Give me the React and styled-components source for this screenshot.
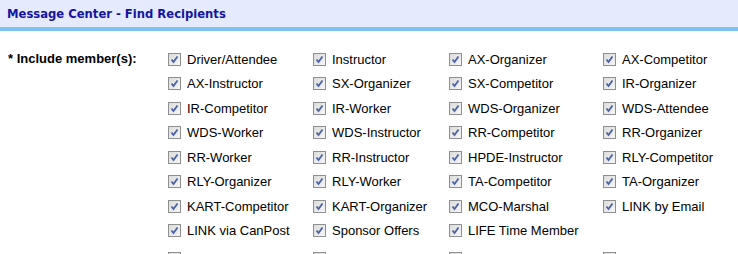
import React from 'react';
import styled, { createGlobalStyle } from 'styled-components';

const GlobalStyle = createGlobalStyle`
  html, body {
    margin: 0;
    padding: 0;
    background: #ffffff;
    overflow: hidden;
  }
  body {
    font-family: "Liberation Sans", Arial, sans-serif;
  }
`;

const Page = styled.div`
  width: 738px;
  height: 254px;
  overflow: hidden;
`;

const Header = styled.div`
  height: 27px;
  background: #e5ebfc;
  border-bottom: 4px solid #7cc3ef;
  display: flex;
  align-items: center;
  padding-left: 7px;
`;

const Title = styled.h1`
  margin: 0;
  font-family: "DejaVu Sans", Verdana, sans-serif;
  font-size: 11.6px;
  font-weight: bold;
  color: #1414a3;
`;

const FormRow = styled.div`
  display: flex;
  padding: 16px 0 0 8px;
`;

const Label = styled.div`
  width: 160px;
  font-size: 13px;
  font-weight: bold;
  color: #000;
  line-height: 24.5px;
`;

const Grid = styled.div`
  display: grid;
  grid-template-columns: 145px 136px 154px 130px;
  grid-auto-rows: 24.5px;
`;

const Option = styled.label`
  display: flex;
  align-items: center;
  gap: 6px;
  font-size: 13px;
  color: #000;
  white-space: nowrap;
`;

const Box = styled.span`
  width: 11px;
  height: 11px;
  border: 1px solid #8e8f8f;
  background: linear-gradient(135deg, #dcdcdc 0%, #f6f6f6 100%);
  display: inline-flex;
  align-items: center;
  justify-content: center;
  flex-shrink: 0;
`;

const Check = () => (
  <svg width="9" height="9" viewBox="0 0 9 9">
    <path d="M1.5 4.5 L3.5 7 L7.5 1.5" fill="none" stroke="#4862a8" strokeWidth="1.8" />
  </svg>
);

const options = [
  'Driver/Attendee', 'Instructor', 'AX-Organizer', 'AX-Competitor',
  'AX-Instructor', 'SX-Organizer', 'SX-Competitor', 'IR-Organizer',
  'IR-Competitor', 'IR-Worker', 'WDS-Organizer', 'WDS-Attendee',
  'WDS-Worker', 'WDS-Instructor', 'RR-Competitor', 'RR-Organizer',
  'RR-Worker', 'RR-Instructor', 'HPDE-Instructor', 'RLY-Competitor',
  'RLY-Organizer', 'RLY-Worker', 'TA-Competitor', 'TA-Organizer',
  'KART-Competitor', 'KART-Organizer', 'MCO-Marshal', 'LINK by Email',
  'LINK via CanPost', 'Sponsor Offers', 'LIFE Time Member',
];

// next group starts just below the fold; only the top edge of its boxes shows
const NextGrid = styled(Grid)`
  margin-left: 168px;
  margin-top: 3px;
`;

export default function App() {
  return (
    <Page>
      <GlobalStyle />
      <Header>
        <Title>Message Center - Find Recipients</Title>
      </Header>
      <FormRow>
        <Label>* Include member(s):</Label>
        <Grid>
          {options.map((name) => (
            <Option key={name}>
              <Box><Check /></Box>
              {name}
            </Option>
          ))}
        </Grid>
      </FormRow>
      <NextGrid>
        {[0, 1, 2, 3].map((i) => (
          <Option key={i}>
            <Box><Check /></Box>
          </Option>
        ))}
      </NextGrid>
    </Page>
  );
}
